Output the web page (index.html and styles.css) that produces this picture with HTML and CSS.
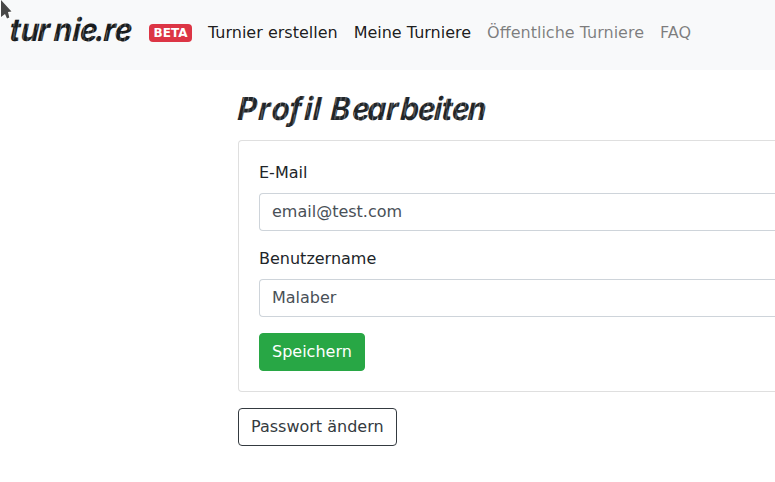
FILE: index.html
```html
<!DOCTYPE html>
<html lang="de">
<head>
<meta charset="utf-8">
<title>turnie.re</title>
<link rel="stylesheet" href="styles.css">
</head>
<body>
<nav class="navbar">
  <a class="brand">
    <svg class="brand-text" width="134" height="46" viewBox="0 0 134 46">
      <defs>
        <pattern id="ink" width="5" height="27" patternUnits="userSpaceOnUse" patternTransform="rotate(8)">
          <rect width="5" height="27" fill="#191c1e"/>
          <path d="M1.4 2 L1.9 12 M3.8 13 L4.2 25" stroke="#a5a8aa" stroke-width=".6"/>
        </pattern>
      </defs>
      <text class="brush" transform="translate(9 41) skewX(-4) scale(.94 1)" x="0 12 30 47 67 75 91 100 112" y="0" fill="url(#ink)">turnie.re</text>
    </svg>
  </a>
  <span class="badge">BETA</span>
  <div class="links">
    <a class="link active">Turnier erstellen</a>
    <a class="link active">Meine Turniere</a>
    <a class="link">Öffentliche Turniere</a>
    <a class="link">FAQ</a>
  </div>
</nav>
<main class="content">
  <h1 class="title">
    <svg class="title-text" width="256" height="38" viewBox="0 0 256 38">
      <defs>
        <pattern id="title-ink" width="5" height="27" patternUnits="userSpaceOnUse" patternTransform="rotate(8)">
          <rect width="5" height="27" fill="#212529"/>
          <path d="M1.4 2 L1.9 12 M3.8 13 L4.2 25" stroke="#adb0b3" stroke-width=".6"/>
        </pattern>
      </defs>
      <text class="brush" transform="translate(0 28) skewX(-4) scale(.94 1)" x="-1 21 35 54 70 79 88 98 121 137 157 172 191 208 216 227 244" y="0" fill="url(#title-ink)">Profil Bearbeiten</text>
    </svg>
  </h1>
  <form class="card">
    <label class="label" for="email">E-Mail</label>
    <input class="field" id="email" value="email@test.com">
    <label class="label" for="username">Benutzername</label>
    <input class="field" id="username" value="Malaber">
    <button class="btn save" type="button">Speichern</button>
  </form>
  <button class="btn outline" type="button">Passwort ändern</button>
</main>
<svg class="cursor" width="14" height="22" viewBox="0 0 14 22">
  <path d="M0-1 L13 12.5 L9.5 13 L10.5 18 L6.5 20 L4.5 15.5 L0 19Z" fill="#fff"/>
  <path d="M1 0 L11.5 11.5 L8 12 L9.3 17.5 L7 18.5 L5 14 L1 17Z" fill="#484848"/>
</svg>
</body>
</html>
```
FILE: styles.css
```css
* { box-sizing: border-box; }
body {
  margin: 0;
  background: #fff;
  color: #212529;
  font: 16px/24px "DejaVu Sans", sans-serif;
}
.navbar {
  display: flex;
  align-items: flex-start;
  height: 70px;
  background: #f8f9fa;
}
.brand { display: block; width: 149px; }
.brand-text, .title-text { display: block; overflow: visible; }
.brush {
  font-family: Inter, sans-serif;
  font-size: 31.5px;
  font-weight: 700;
  font-style: italic;
}
.badge {
  width: 43px;
  height: 18px;
  margin-top: 24px;
  border-radius: 4px;
  background: #dc3545;
  color: #fff;
  font-size: 12px;
  font-weight: 700;
  line-height: 18px;
  text-align: center;
}
.links {
  display: flex;
  gap: 16px;
  margin: 21px 0 0 16px;
  white-space: nowrap;
}
.link { color: rgba(0, 0, 0, .5); }
.link.active { color: rgba(0, 0, 0, .9); }
.content { padding: 22px 0 0 238px; }
.title { height: 38px; margin: 0 0 10px; }
.card {
  height: 252px;
  margin-bottom: 16px;
  padding: 20px 0 20px 20px;
  border: 1px solid #dfdfdf;
  border-right: 0;
  border-radius: 4px 0 0 4px;
}
.label { display: block; margin-bottom: 8px; }
.field {
  display: block;
  width: 100%;
  height: 38px;
  margin: 0 0 16px;
  padding: 5px 12px 7px;
  border: 1px solid #ced4da;
  border-right: 0;
  border-radius: 4px 0 0 4px;
  background: #fff;
  color: #495057;
  font: inherit;
}
.btn {
  display: block;
  height: 38px;
  padding: 6px 12px;
  border: 1px solid;
  border-radius: 4px;
  font: inherit;
}
.save { border-color: #28a745; background: #28a745; color: #fff; }
.outline { border-color: #343a40; background: transparent; color: #343a40; }
.cursor { position: absolute; top: 0; left: 0; }
```
